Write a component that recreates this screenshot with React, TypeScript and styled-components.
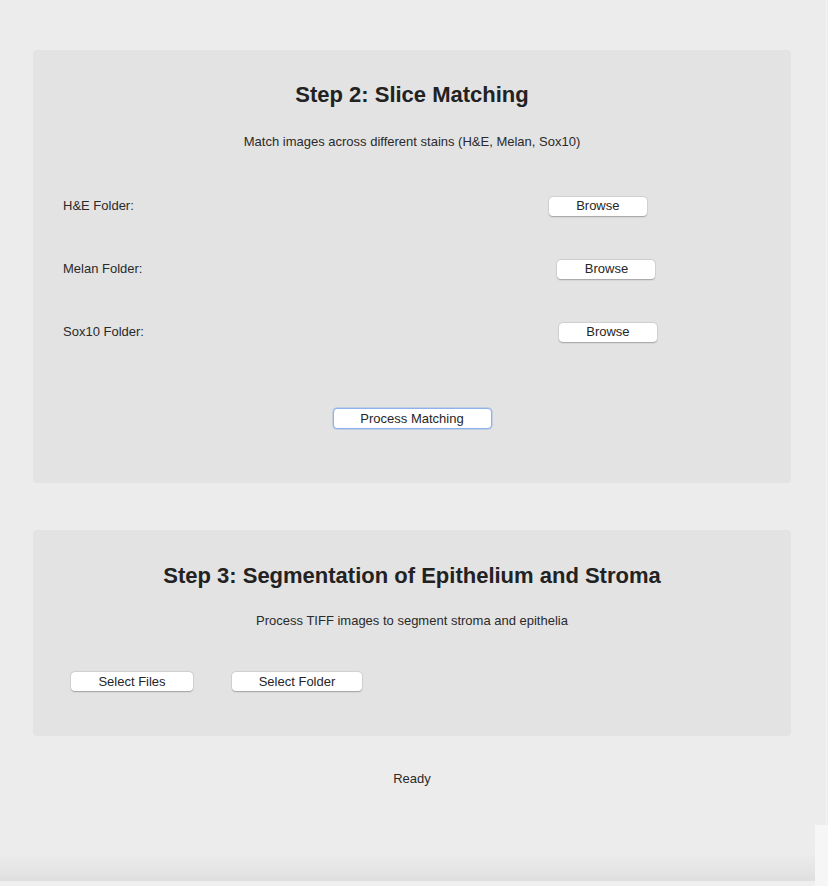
import React from "react";
import styled, { createGlobalStyle } from "styled-components";

const Global = createGlobalStyle`
  html, body {
    margin: 0;
    padding: 0;
    background: #ececec;
    font-family: "Liberation Sans", Arial, Helvetica, sans-serif;
    color: #2a2a2a;
  }
`;

const Page = styled.div`
  position: relative;
  width: 828px;
  height: 886px;
  box-sizing: border-box;
  padding: 50px 37px 0 33px;
  display: flex;
  flex-direction: column;
  background: #ececec;
  overflow: hidden;
`;

const Panel = styled.section<{ $pt: number; $pb: number; $mt?: number }>`
  background: #e3e3e3;
  border-radius: 4px;
  padding: ${(p) => p.$pt}px 30px ${(p) => p.$pb}px 30px;
  margin-top: ${(p) => p.$mt ?? 0}px;
  display: flex;
  flex-direction: column;
`;

const Title = styled.h2`
  margin: 0;
  font-size: 22px;
  line-height: 26px;
  font-weight: 700;
  color: #222;
  text-align: center;
`;

const Subtitle = styled.p<{ $mt: number }>`
  margin: ${(p) => p.$mt}px 0 0;
  font-size: 13px;
  line-height: 16px;
  color: #2a2a2a;
  text-align: center;
`;

const FolderRow = styled.div<{ $mt: number }>`
  display: flex;
  align-items: center;
  height: 20px;
  margin-top: ${(p) => p.$mt}px;
`;

const Label = styled.span`
  font-size: 13px;
  line-height: 16px;
  color: #2a2a2a;
  white-space: nowrap;
`;

const PathSpacer = styled.span`
  width: 415px;
  flex: none;
`;

const Button = styled.button<{ $w: number; $h?: number; $focus?: boolean }>`
  width: ${(p) => p.$w}px;
  height: ${(p) => p.$h ?? 19}px;
  box-sizing: border-box;
  flex: none;
  padding: 0;
  background: #ffffff;
  border: ${(p) => (p.$focus ? "1.5px solid #8db2ec" : "none")};
  border-radius: 4px;
  box-shadow: ${(p) =>
    p.$focus
      ? "0 0 0 0.5px rgba(120,160,225,0.6)"
      : "0 0.5px 1.5px rgba(0,0,0,0.28), 0 0 0 0.5px rgba(0,0,0,0.06)"};
  font-family: "Liberation Sans", Arial, Helvetica, sans-serif;
  font-size: 13px;
  line-height: 16px;
  color: #262626;
  cursor: pointer;
`;

const CenterRow = styled.div<{ $mt: number }>`
  display: flex;
  justify-content: center;
  margin-top: ${(p) => p.$mt}px;
`;

const ActionRow = styled.div<{ $mt: number }>`
  display: flex;
  gap: 39px;
  padding-left: 8px;
  margin-top: ${(p) => p.$mt}px;
`;

const Status = styled.div`
  margin-top: 35px;
  font-size: 13px;
  line-height: 16px;
  text-align: center;
  color: #2a2a2a;
`;

const BottomShade = styled.div`
  margin: auto -37px 0 -33px;
  height: 33px;
  background: linear-gradient(
    to bottom,
    rgba(0, 0, 0, 0) 0%,
    rgba(0, 0, 0, 0.035) 60%,
    rgba(0, 0, 0, 0.06) 84%,
    #efefef 85%,
    #efefef 100%
  );
`;

const CornerPatch = styled.div`
  position: absolute;
  right: 0;
  bottom: 0;
  width: 13px;
  height: 61px;
  background: #f6f6f6;
`;

const EdgeLine = styled.div`
  position: absolute;
  top: 0;
  right: 1px;
  width: 1px;
  height: 825px;
  background: #f3f3f0;
`;

const folders = [
  { label: "H&E Folder:", mt: 46 },
  { label: "Melan Folder:", mt: 43 },
  { label: "Sox10 Folder:", mt: 43 },
];

export default function App() {
  return (
    <>
      <Global />
      <Page>
        <Panel $pt={32} $pb={54}>
          <Title>Step 2: Slice Matching</Title>
          <Subtitle $mt={26}>
            Match images across different stains (H&amp;E, Melan, Sox10)
          </Subtitle>
          {folders.map((f) => (
            <FolderRow key={f.label} $mt={f.mt}>
              <Label>{f.label}</Label>
              <PathSpacer />
              <Button $w={98}>Browse</Button>
            </FolderRow>
          ))}
          <CenterRow $mt={66}>
            <Button $w={159} $h={21} $focus>
              Process Matching
            </Button>
          </CenterRow>
        </Panel>

        <Panel $pt={33} $pb={45} $mt={47}>
          <Title>Step 3: Segmentation of Epithelium and Stroma</Title>
          <Subtitle $mt={24}>
            Process TIFF images to segment stroma and epithelia
          </Subtitle>
          <ActionRow $mt={43}>
            <Button $w={122}>Select Files</Button>
            <Button $w={130}>Select Folder</Button>
          </ActionRow>
        </Panel>

        <Status>Ready</Status>
        <BottomShade />
        <EdgeLine />
        <CornerPatch />
      </Page>
    </>
  );
}
